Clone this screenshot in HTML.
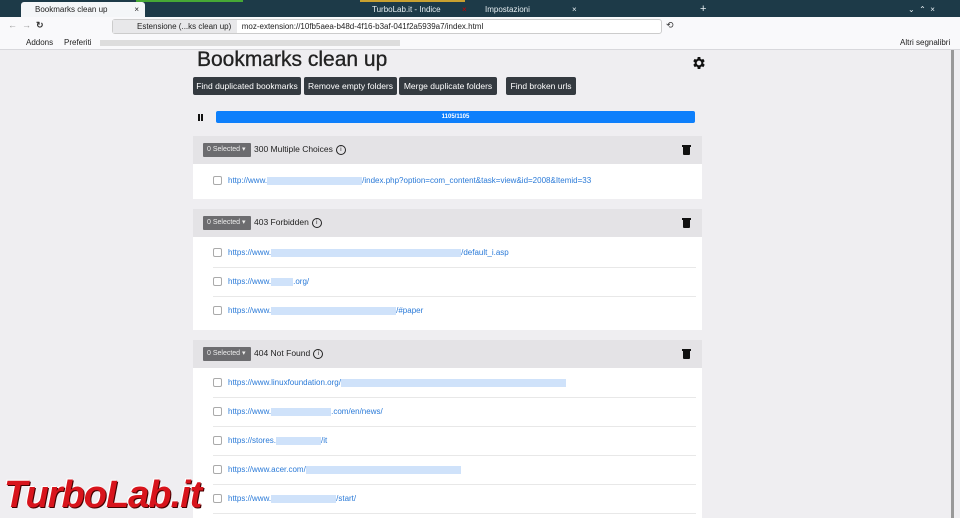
<!DOCTYPE html><html><head><style>
body{margin:0;width:960px;height:518px;overflow:hidden;background:#efeef1;font-family:"Liberation Sans",sans-serif;position:relative}
.tabs{position:absolute;top:0;left:0;width:960px;height:17px;background:#1d3a48}
.tab{position:absolute;top:2px;height:15px;font-size:8px;color:#e6eef2;line-height:15px}
.nav{position:absolute;top:17px;left:0;width:960px;height:19px;background:#f9f9fb}
.bm{position:absolute;top:36px;left:0;width:960px;height:13px;background:#f9f9fb;border-bottom:1px solid #d8d8dc;font-size:8px;color:#222;line-height:13px}
.url{position:absolute;left:112px;top:2px;width:548px;height:13px;border:1px solid #ccc;background:#fff;font-size:8px;line-height:13px;border-radius:3px;color:#222}
h1{position:absolute;left:197px;top:48px;margin:0;font-size:21px;font-weight:normal;color:#222;-webkit-text-stroke:0.3px #222}
.btn{position:absolute;top:77px;height:18px;background:#343a40;color:#fff;font-size:8.5px;line-height:18px;text-align:center;border-radius:2px}
.prog{position:absolute;left:216px;top:111px;width:479px;height:12px;background:#0d7ffb;border-radius:2px;color:#fff;font-size:6px;font-weight:bold;text-align:center;line-height:12px}
.hd{position:absolute;left:193px;width:509px;height:28px;background:#e4e3e6;font-size:8.5px;color:#222}
.sel{position:absolute;left:10px;top:7px;width:48px;height:14px;background:#6c6c6f;color:#eee;font-size:7px;line-height:14px;text-indent:4px;border-radius:1px}
.hd .t{position:absolute;left:61px;top:8px}
.bin{position:absolute;right:12px;top:11px;width:7px;height:8px;background:#111;border-radius:0 0 1px 1px}
.bin:before{content:"";position:absolute;top:-2px;left:-1px;width:9px;height:1.5px;background:#111}
.body{position:absolute;left:193px;width:509px;background:#fff}
.row{position:absolute;left:20px;right:6px;height:28px;border-bottom:1px solid #e8e8e8;font-size:8px;color:#2a7ad8;line-height:28px}
.row i{display:inline-block;width:7px;height:7px;border:1px solid #aaa;border-radius:2px;vertical-align:middle;margin-right:6px;background:#fff}
.blur{display:inline-block;height:8px;background:#cfe2fa;vertical-align:middle}
.ic{display:inline-block;width:8px;height:8px;border:1px solid #222;border-radius:50%;font-size:6px;line-height:8px;text-align:center;vertical-align:middle;margin-left:3px}
</style></head><body>
<div class="tabs">
<div class="tab" style="left:21px;width:110px;background:#f4f6f8;color:#222;border-radius:3px 3px 0 0;padding-left:14px">Bookmarks clean up<span style="float:right;margin-right:6px">×</span></div>
<div style="position:absolute;left:136px;top:0;width:107px;height:2px;background:#46a835"></div>
<div style="position:absolute;left:360px;top:0;width:105px;height:2px;background:#c8a030"></div>
<div class="tab" style="left:372px">TurboLab.it - Indice</div>
<div class="tab" style="left:462px;color:#c00">×</div>
<div class="tab" style="left:485px">Impostazioni</div>
<div class="tab" style="left:572px">×</div>
<div class="tab" style="left:700px;font-size:11px">+</div>
<div class="tab" style="left:908px">⌄ &nbsp;⌃ &nbsp;×</div>
</div>
<div class="nav"><span style="position:absolute;left:8px;top:3px;font-size:9px;color:#999">←&nbsp; →&nbsp; <b style="color:#333">↻</b></span>
<div class="url"><span style="display:inline-block;background:#e8e8ea;padding:0 6px 0 24px">Estensione (...ks clean up)</span>&nbsp; moz-extension://10fb5aea-b48d-4f16-b3af-041f2a5939a7/index.html</div>
<span style="position:absolute;left:666px;top:3px;font-size:9px;color:#333">⟲</span></div>
<div class="bm"><span style="position:absolute;left:26px">Addons</span><span style="position:absolute;left:64px">Preferiti</span><span style="position:absolute;left:100px;width:300px;top:4px;height:6px;background:#ddd"></span><span style="position:absolute;left:900px">Altri segnalibri</span></div>
<div style="position:absolute;left:951px;top:50px;width:3px;height:468px;background:#999"></div>
<h1>Bookmarks clean up</h1>
<svg style="position:absolute;left:691px;top:55px" width="16" height="16" viewBox="0 0 24 24"><path fill="#111" d="M19.4 13a7.5 7.5 0 000-2l2.1-1.6-2-3.5-2.5 1a7 7 0 00-1.7-1L15 3h-4l-.4 2.9a7 7 0 00-1.7 1l-2.5-1-2 3.5L6.6 11a7.5 7.5 0 000 2l-2.1 1.6 2 3.5 2.5-1a7 7 0 001.7 1L11 21h4l.4-2.9a7 7 0 001.7-1l2.5 1 2-3.5zM13 15.5A3.5 3.5 0 1113 8.5a3.5 3.5 0 010 7z" transform="translate(-1 0)"/></svg>
<div class="btn" style="left:193px;width:108px">Find duplicated bookmarks</div>
<div class="btn" style="left:304px;width:93px">Remove empty folders</div>
<div class="btn" style="left:399px;width:98px">Merge duplicate folders</div>
<div class="btn" style="left:506px;width:70px">Find broken urls</div>
<div style="position:absolute;left:198px;top:114px;height:7px;border-left:2px solid #111;border-right:2px solid #111;width:1px"></div>
<div class="prog">1105/1105</div>
<div class="hd" style="top:136px"><div class="sel">0 Selected ▾</div><span class="t">300 Multiple Choices<span class="ic">i</span></span><div class="bin"></div></div>
<div class="body" style="top:164px;height:35px"><div class="row" style="top:3px;border:0"><i></i>http://www.<span class="blur" style="width:95px"></span>/index.php?option=com_content&amp;task=view&amp;id=2008&amp;Itemid=33</div></div>
<div class="hd" style="top:209px"><div class="sel">0 Selected ▾</div><span class="t">403 Forbidden<span class="ic">i</span></span><div class="bin"></div></div>
<div class="body" style="top:237px;height:93px">
<div class="row" style="top:2px"><i></i>https://www.<span class="blur" style="width:190px"></span>/default_i.asp</div>
<div class="row" style="top:31px"><i></i>https://www.<span class="blur" style="width:22px"></span>.org/</div>
<div class="row" style="top:60px;border:0"><i></i>https://www.<span class="blur" style="width:125px"></span>/#paper</div></div>
<div class="hd" style="top:340px"><div class="sel">0 Selected ▾</div><span class="t">404 Not Found<span class="ic">i</span></span><div class="bin"></div></div>
<div class="body" style="top:368px;height:150px">
<div class="row" style="top:1px"><i></i>https://www.linuxfoundation.org/<span class="blur" style="width:225px"></span></div>
<div class="row" style="top:30px"><i></i>https://www.<span class="blur" style="width:60px"></span>.com/en/news/</div>
<div class="row" style="top:59px"><i></i>https://stores.<span class="blur" style="width:45px"></span>/it</div>
<div class="row" style="top:88px"><i></i>https://www.acer.com/<span class="blur" style="width:155px"></span></div>
<div class="row" style="top:117px"><i></i>https://www.<span class="blur" style="width:65px"></span>/start/</div></div>
<div style="position:absolute;left:4px;top:474px;font-size:38px;font-weight:bold;font-style:italic;color:#d8141c;letter-spacing:-1px;text-shadow:1px 1px 0 #400,-1px -1px 0 #fff;line-height:42px">TurboLab.it</div>
</body></html>
